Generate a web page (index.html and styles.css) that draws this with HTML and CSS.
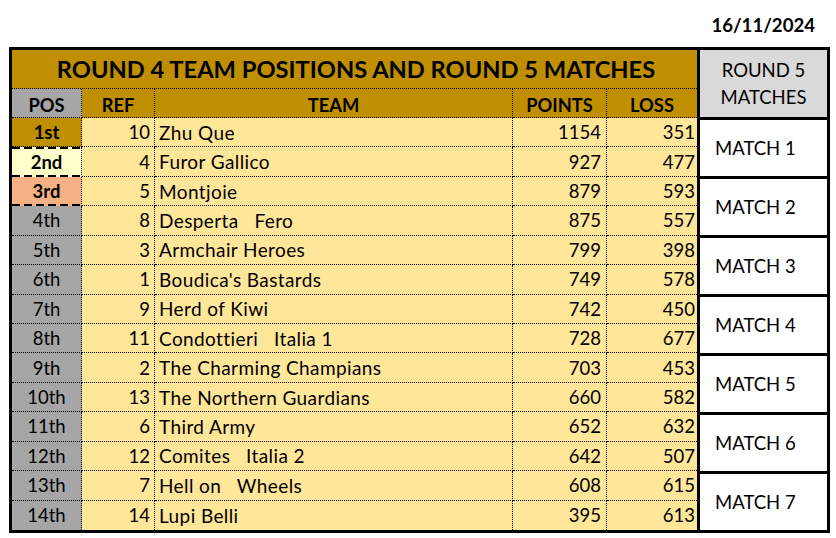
FILE: index.html
```html
<!DOCTYPE html>
<html lang="en">
<head>
<meta charset="utf-8">
<title>Round 4 Team Positions</title>
<link rel="stylesheet" href="styles.css">
</head>
<body>
<div class="page">
  <div class="date-row"><span class="date">16/11/2024</span></div>
  <div class="sheet">
    <div class="standings">
      <div class="title">ROUND 4 TEAM POSITIONS AND ROUND 5 MATCHES</div>
      <div class="grid">
        <div class="cell head pos-head">POS</div>
        <div class="cell head">REF</div>
        <div class="cell head">TEAM</div>
        <div class="cell head">POINTS</div>
        <div class="cell head last">LOSS</div>

        <div class="cell pos gold bold">1st</div><div class="cell num ref">10</div><div class="cell team">Zhu Que</div><div class="cell num pts">1154</div><div class="cell num loss last">351</div>
        <div class="cell pos cream bold dash-top dash-bottom">2nd</div><div class="cell num ref">4</div><div class="cell team">Furor Gallico</div><div class="cell num pts">927</div><div class="cell num loss last">477</div>
        <div class="cell pos salmon bold dash-bottom">3rd</div><div class="cell num ref">5</div><div class="cell team">Montjoie</div><div class="cell num pts">879</div><div class="cell num loss last">593</div>
        <div class="cell pos grey">4th</div><div class="cell num ref">8</div><div class="cell team">Desperta&nbsp;&nbsp; Fero</div><div class="cell num pts">875</div><div class="cell num loss last">557</div>
        <div class="cell pos grey">5th</div><div class="cell num ref">3</div><div class="cell team">Armchair Heroes</div><div class="cell num pts">799</div><div class="cell num loss last">398</div>
        <div class="cell pos grey">6th</div><div class="cell num ref">1</div><div class="cell team">Boudica's Bastards</div><div class="cell num pts">749</div><div class="cell num loss last">578</div>
        <div class="cell pos grey">7th</div><div class="cell num ref">9</div><div class="cell team">Herd of Kiwi</div><div class="cell num pts">742</div><div class="cell num loss last">450</div>
        <div class="cell pos grey">8th</div><div class="cell num ref">11</div><div class="cell team">Condottieri&nbsp;&nbsp; Italia 1</div><div class="cell num pts">728</div><div class="cell num loss last">677</div>
        <div class="cell pos grey">9th</div><div class="cell num ref">2</div><div class="cell team">The Charming Champians</div><div class="cell num pts">703</div><div class="cell num loss last">453</div>
        <div class="cell pos grey">10th</div><div class="cell num ref">13</div><div class="cell team">The Northern Guardians</div><div class="cell num pts">660</div><div class="cell num loss last">582</div>
        <div class="cell pos grey">11th</div><div class="cell num ref">6</div><div class="cell team">Third Army</div><div class="cell num pts">652</div><div class="cell num loss last">632</div>
        <div class="cell pos grey">12th</div><div class="cell num ref">12</div><div class="cell team">Comites&nbsp;&nbsp; Italia 2</div><div class="cell num pts">642</div><div class="cell num loss last">507</div>
        <div class="cell pos grey">13th</div><div class="cell num ref">7</div><div class="cell team">Hell on&nbsp;&nbsp; Wheels</div><div class="cell num pts">608</div><div class="cell num loss last">615</div>
        <div class="cell pos grey bottom">14th</div><div class="cell num ref bottom">14</div><div class="cell team bottom">Lupi Belli</div><div class="cell num pts bottom">395</div><div class="cell num loss last bottom">613</div>
      </div>
    </div>
    <div class="matches">
      <div class="matches-head">ROUND 5<br>MATCHES</div>
      <div class="match">MATCH 1</div>
      <div class="match">MATCH 2</div>
      <div class="match">MATCH 3</div>
      <div class="match">MATCH 4</div>
      <div class="match">MATCH 5</div>
      <div class="match">MATCH 6</div>
      <div class="match">MATCH 7</div>
    </div>
  </div>
</div>
</body>
</html>
```

FILE: styles.css
```css
* { box-sizing: border-box; }

html, body {
  margin: 0;
  padding: 0;
  background: #ffffff;
}

body {
  font-family: Lato, "Open Sans", "Liberation Sans", sans-serif;
  color: #000000;
  width: 836px;
  height: 538px;
  overflow: hidden;
}

.date-row {
  height: 47px;
  display: flex;
  justify-content: flex-end;
  padding: 15px 21px 0 0;
}

.date {
  font-size: 18.6px;
  font-weight: 700;
  line-height: 20px;
}

.sheet {
  margin-left: 9px;
  width: 821px;
  display: flex;
  border: 3px solid #000000;
}

.standings {
  width: 685px;
  display: flex;
  flex-direction: column;
}

.title {
  height: 39px;
  background: #bf8f00;
  border-bottom: 1px dotted #000000;
  display: flex;
  align-items: center;
  justify-content: center;
  font-size: 23.7px;
  font-weight: 700;
  padding-left: 3px;
}

.grid {
  height: 441px;
  display: grid;
  grid-template-columns: 70px 73px 358px 94px 90px;
  grid-template-rows: 29px repeat(14, 1fr);
  background: #ffe699;
}

.cell {
  display: flex;
  align-items: center;
  border-right: 1px dotted #000000;
  border-bottom: 1px dotted #000000;
  font-size: 18.5px;
  white-space: pre;
  overflow: hidden;
}

.cell.last { border-right: none; }
.cell.bottom { border-bottom: none; }

.head {
  background: #bf8f00;
  justify-content: center;
  font-size: 18.3px;
  font-weight: 700;
  padding-top: 4px;
}

.head.pos-head { background: #a6a6a6; }

.pos { justify-content: center; }
.bold { font-weight: 700; }
.gold { background-color: #bf8f00; }
.cream { background-color: #ffffcc; }
.salmon { background-color: #f4b183; }
.grey { background-color: #a6a6a6; }

.dash-top,
.dash-bottom {
  background-repeat: no-repeat;
  background-origin: border-box;
  background-clip: border-box;
  border-bottom-color: transparent;
}

.dash-top.dash-bottom {
  background-image:
    repeating-linear-gradient(90deg, #000 0 8px, transparent 8px 12px),
    repeating-linear-gradient(90deg, #000 0 8px, transparent 8px 12px);
  background-size: 100% 2px, 100% 2px;
  background-position: left top, left bottom;
}

.dash-bottom {
  background-image: repeating-linear-gradient(90deg, #000 0 8px, transparent 8px 12px);
  background-size: 100% 2px;
  background-position: left bottom;
}

.num {
  justify-content: flex-end;
  font-variant-numeric: tabular-nums;
}
.ref { padding-right: 4px; }
.pts { padding-right: 5px; }
.loss { padding-right: 2px; }
.team {
  padding-left: 4px;
  font-size: 19px;
  letter-spacing: 0.4px;
}

.matches {
  width: 130px;
  border-left: 3px solid #000000;
  display: flex;
  flex-direction: column;
}

.matches-head {
  height: 67px;
  background: #d9d9d9;
  display: flex;
  align-items: center;
  justify-content: center;
  text-align: center;
  font-size: 18.5px;
  line-height: 27px;
}

.match {
  flex: 1;
  border-top: 3px solid #000000;
  display: flex;
  align-items: center;
  padding-left: 15px;
  font-size: 18.5px;
}
```
